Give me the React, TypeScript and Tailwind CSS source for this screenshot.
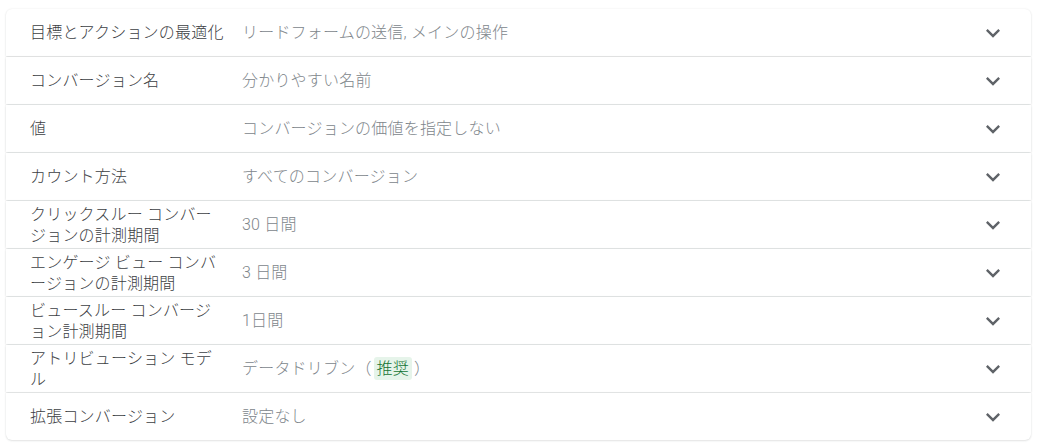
import { MdExpandMore } from "react-icons/md";

type Row = {
    label: string;
    value: React.ReactNode;
};

const rows: Row[] = [
    { label: "目標とアクションの最適化", value: "リードフォームの送信, メインの操作" },
    { label: "コンバージョン名", value: "分かりやすい名前" },
    { label: "値", value: "コンバージョンの価値を指定しない" },
    { label: "カウント方法", value: "すべてのコンバージョン" },
    { label: "クリックスルー コンバージョンの計測期間", value: "30 日間" },
    { label: "エンゲージ ビュー コンバージョンの計測期間", value: "3 日間" },
    { label: "ビュースルー コンバージョン計測期間", value: "1日間" },
    {
        label: "アトリビューション モデル",
        value: (
            <>
                データドリブン（
                <span className="mx-[2px] inline-block rounded-[3px] bg-[#e6f4ea] px-[3px] leading-[23px] text-[#137333]">
                    推奨
                </span>
                ）
            </>
        ),
    },
    { label: "拡張コンバージョン", value: "設定なし" },
];

const App = () => {
    return (
        <div
            className="min-h-screen w-full bg-white pt-[9px]"
            style={{ fontFamily: "Roboto, 'Noto Sans CJK JP', sans-serif" }}
        >
            <div className="ml-[6px] flex w-[1025px] flex-col gap-px">
                {rows.map((r, i) => (
                    <div
                        key={i}
                        className={
                            "flex h-[47px] items-center bg-white pl-[24px] pr-[24px] shadow-[0_1px_2px_0_rgba(60,64,67,0.12),0_0_2px_0_rgba(60,64,67,0.1)] " +
                            (i === 0 ? "rounded-t-[6px] " : "") +
                            (i === rows.length - 1 ? "rounded-b-[6px] " : "")
                        }
                    >
                        <div className="w-[212px] shrink-0 pr-[16px] text-[16px] font-light leading-[21px] tracking-[0.2px] text-[#3c4043]">
                            {r.label}
                        </div>
                        <div className="flex-1 text-[16px] font-light leading-[21px] tracking-[0.2px] text-[#80868b]">
                            {r.value}
                        </div>
                        <MdExpandMore className="h-7 w-7 text-[#5f6368]" />
                    </div>
                ))}
            </div>
        </div>
    );
};

export default App;
